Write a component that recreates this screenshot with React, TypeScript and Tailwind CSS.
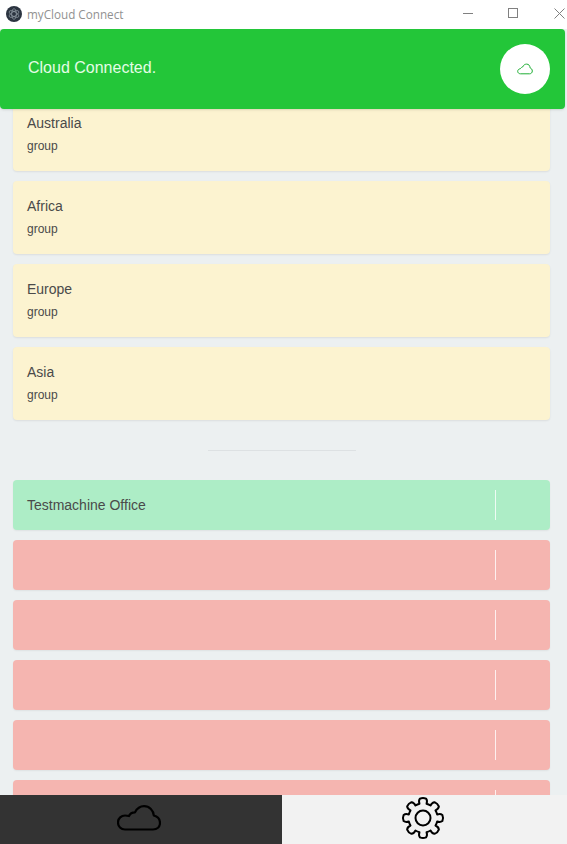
import React from "react";

const groups = ["Australia", "Africa", "Europe", "Asia"];
const machines = ["Testmachine Office", "", "", "", "", ""];

function CloudIcon() {
  return (
    <svg viewBox="0 0 44 26" fill="none" stroke="currentColor" strokeWidth={2.2} strokeLinejoin="round" className="w-[44px] h-[26px]">
      <path d="M8 24.5C4 24.5 1 21.5 1 17.5C1 13 4.5 10.5 8 10.5C9.5 10.5 10.5 10.5 12 11C13 8.5 15.5 7.3 18 7.3C20 3.5 23.5 1.2 27 1.2C32.5 1.2 36.5 5.5 36.8 10.5C40.5 11.5 43 14.5 43 18C43 22 40 24.5 36 24.5Z" />
    </svg>
  );
}

function GearIcon() {
  const teeth = Array.from({ length: 8 }, (_, i) => i * 45);
  const r = 14.6;
  const pts: string[] = [];
  teeth.forEach((a) => {
    const rad = (d: number) => ((a + d - 90) * Math.PI) / 180;
    const p = (rr: number, d: number) => `${(22 + rr * Math.cos(rad(d))).toFixed(2)} ${(22 + rr * Math.sin(rad(d))).toFixed(2)}`;
    pts.push(`${pts.length ? "L" : "M"}${p(r, -14)}`);
    pts.push(`Q${p(18, -15)} ${p(19.6, -9)}`);
    pts.push(`Q${p(20.7, 0)} ${p(19.6, 9)}`);
    pts.push(`Q${p(18, 15)} ${p(r, 14)}`);
    pts.push(`A${r} ${r} 0 0 1 ${p(r, 31)}`);
  });
  return (
    <svg viewBox="0 0 44 44" fill="none" stroke="currentColor" strokeWidth={2} strokeLinejoin="round" className="w-[44px] h-[44px] text-black">
      <path d={pts.join(" ") + "Z"} />
      <circle cx="22" cy="22" r="7.5" />
    </svg>
  );
}

function AppLogo() {
  return (
    <svg viewBox="0 0 16 16" className="w-4 h-4 shrink-0">
      <circle cx="8" cy="8" r="8" fill="#2b3440" />
      <g fill="none" stroke="#b9c4cc" strokeWidth="0.6" opacity="0.85">
        <ellipse cx="8" cy="8" rx="5.4" ry="2.3" transform="rotate(30 8 8)" />
        <ellipse cx="8" cy="8" rx="5.4" ry="2.3" transform="rotate(90 8 8)" />
        <ellipse cx="8" cy="8" rx="5.4" ry="2.3" transform="rotate(150 8 8)" />
      </g>
    </svg>
  );
}

export default function App() {
  return (
    <div className="relative h-[844px] w-[567px] overflow-hidden flex flex-col bg-[#ecf0f1] font-['Liberation_Sans',Arial,sans-serif] text-[#4a4a4a]">
      <div className="h-[29px] shrink-0 bg-white flex items-center justify-between pl-[6px]">
        <div className="flex items-center gap-[5px]">
          <AppLogo />
          <span className="text-[11.7px] text-[#919191] font-['Open_Sans',sans-serif]">myCloud Connect</span>
        </div>
        <div className="flex items-center pb-[3px] text-[#808080]">
          <div className="w-[46px] flex justify-center">
            <svg viewBox="0 0 10 10" className="w-[10px] h-[10px]" stroke="currentColor" strokeWidth="1"><path d="M0 5.5H10" /></svg>
          </div>
          <div className="w-[44px] flex justify-center">
            <svg viewBox="0 0 10 10" className="w-[10px] h-[10px]" fill="none" stroke="currentColor" strokeWidth="1"><rect x="0.5" y="0.5" width="9" height="9" /></svg>
          </div>
          <div className="w-[32px] flex justify-start pl-[19px]">
            <svg viewBox="0 0 11 11" className="w-[11px] h-[11px] shrink-0" stroke="currentColor" strokeWidth="1"><path d="M0.5 0.5L10.5 10.5M10.5 0.5L0.5 10.5" /></svg>
          </div>
        </div>
      </div>

      <div className="relative flex-1 min-h-0 overflow-hidden">
        <div className="absolute z-10 top-0 left-0 w-[565px] h-[80px] rounded-[4px] bg-[#23c639] flex items-center justify-between pl-[28px] pr-[15px] shadow-sm">
          <span className="mb-[2px] text-base text-[#e4fde6]">Cloud Connected.</span>
          <div className="w-[50px] h-[50px] rounded-full bg-white flex items-center justify-center text-[#1fae35]">
            <svg viewBox="0 0 16 12" fill="none" stroke="currentColor" strokeWidth="1" strokeLinejoin="round" className="w-4 h-3">
              <path d="M3.5 10.8C2 10.8 0.7 9.8 0.7 8.3C0.7 6.9 1.8 5.9 3.2 5.8C4 4.7 4.6 4.3 5.6 4C6.4 2.2 7.8 1.1 9.6 1.1C11.8 1.1 13 2.8 13 4.8C14.4 5.3 15.3 6.5 15.3 8C15.3 9.7 14.1 10.8 12.6 10.8Z" />
            </svg>
          </div>
        </div>

        <div className="pt-[69px] pl-[13px] pr-[17px] flex flex-col">
          <div className="flex flex-col gap-[10px]">
            {groups.map((g) => (
              <div key={g} className="h-[73px] rounded-[4px] bg-[#fcf3d0] shadow-[0_1px_2px_rgba(0,0,0,0.08)] px-[14px] pt-[16px]">
                <div className="text-sm leading-[18px]">{g}</div>
                <div className="text-xs leading-[14px] mt-[7px]">group</div>
              </div>
            ))}
          </div>
          <div className="mt-[30px] mb-[29px] mx-auto w-[148px] h-px bg-[#dde1e3]" />
          <div className="flex flex-col gap-[10px]">
            {machines.map((m, i) => (
              <div key={i} className={`h-[50px] shrink-0 rounded-[4px] flex items-center pl-[14px] pr-[54px] shadow-[0_1px_2px_rgba(0,0,0,0.06)] ${i === 0 ? "bg-[#adedc6]" : "bg-[#f5b5b0]"}`}>
                <span className="flex-1 text-sm">{m}</span>
                <div className="w-px h-[30px] bg-white/80" />
              </div>
            ))}
          </div>
        </div>
      </div>

      <div className="h-[49px] shrink-0 flex relative z-20">
        <div className="w-[282px] bg-[#333333] flex items-center justify-center pr-[4px] pb-[3px] text-black">
          <CloudIcon />
        </div>
        <div className="flex-1 bg-[#f2f2f2] flex items-center justify-center pr-[3px] pb-[3px]">
          <GearIcon />
        </div>
      </div>
    </div>
  );
}
